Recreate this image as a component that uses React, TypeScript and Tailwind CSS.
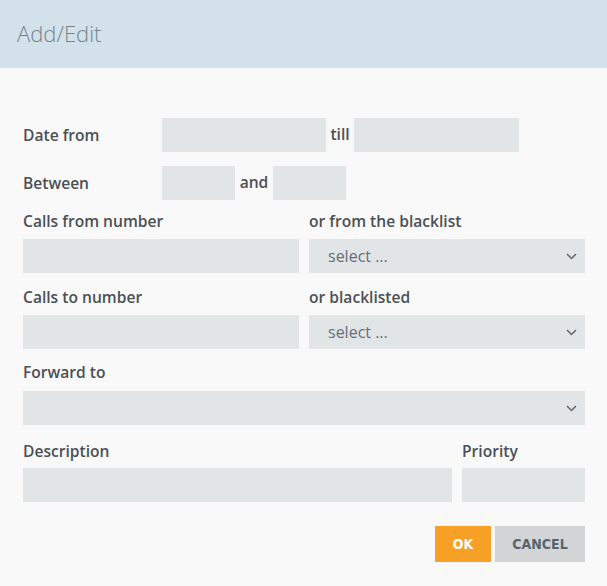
const field = 'h-[34px] bg-[#e2e5e6] outline-none px-3 text-[16px] text-[#4a4a4a]'
const label = 'block h-5 leading-5 text-[15.6px] font-semibold text-[#4a5055]'
const inline = 'text-center text-[15.6px] font-semibold text-[#4a5055]'

function Chevron() {
  return (
    <svg width="11" height="7" viewBox="0 0 11 7" fill="none" className="text-[#5b6770]">
      <path d="M1 1l4.5 4.5L10 1" stroke="currentColor" strokeWidth="1.5" />
    </svg>
  )
}

function Select({ value, className = '' }: { value?: string; className?: string }) {
  return (
    <div className={`${field} flex items-center justify-between pl-[19px] pr-2 ${className}`}>
      <span className="text-[#62707a]">{value}</span>
      <Chevron />
    </div>
  )
}

export default function App() {
  return (
    <div className="w-[607px] h-[586px] bg-[#f9f9f9] font-['Open_Sans',sans-serif]">
      <header className="h-[68px] bg-[#d3e1ea] flex items-center px-[17px] pb-[2px]">
        <h1 className="text-[22px] font-light text-[#75858f]">Add/Edit</h1>
      </header>

      <div className="pl-[23px] pr-[22px] pt-[50px]">
        <div className="flex items-center">
          <span className={`${label} w-[139px]`}>Date from</span>
          <input className={`${field} w-[164px]`} />
          <span className={`${inline} w-7`}>till</span>
          <input className={`${field} w-[165px]`} />
        </div>

        <div className="flex items-center mt-[14px]">
          <span className={`${label} w-[139px]`}>Between</span>
          <input className={`${field} w-[73px]`} />
          <span className={`${inline} w-[38px]`}>and</span>
          <input className={`${field} w-[73px]`} />
        </div>

        <div className="grid grid-cols-2 gap-x-[10px] mt-[11px]">
          <div>
            <label className={label}>Calls from number</label>
            <input className={`${field} w-full mt-2`} />
          </div>
          <div>
            <label className={label}>or from the blacklist</label>
            <Select value="select ..." className="mt-2" />
          </div>
        </div>

        <div className="grid grid-cols-2 gap-x-[10px] mt-[14px]">
          <div>
            <label className={label}>Calls to number</label>
            <input className={`${field} w-full mt-2`} />
          </div>
          <div>
            <label className={label}>or blacklisted</label>
            <Select value="select ..." className="mt-2" />
          </div>
        </div>

        <div className="mt-[13px]">
          <label className={label}>Forward to</label>
          <Select className="mt-[9px]" />
        </div>

        <div className="flex gap-[10px] mt-4">
          <div className="flex-1">
            <label className={label}>Description</label>
            <input className={`${field} w-full mt-[7px]`} />
          </div>
          <div className="w-[123px]">
            <label className={label}>Priority</label>
            <input className={`${field} w-full mt-[7px]`} />
          </div>
        </div>

        <div className="flex justify-end gap-1 mt-6">
          <button className="w-14 h-9 bg-[#f6a125] text-white text-[14px] font-bold font-['DejaVu_Sans_Condensed',sans-serif]">
            OK
          </button>
          <button className="w-[90px] h-9 bg-[#d3d4d5] text-[#55646e] text-[14px] font-bold font-['DejaVu_Sans_Condensed',sans-serif]">
            CANCEL
          </button>
        </div>
      </div>
    </div>
  )
}
